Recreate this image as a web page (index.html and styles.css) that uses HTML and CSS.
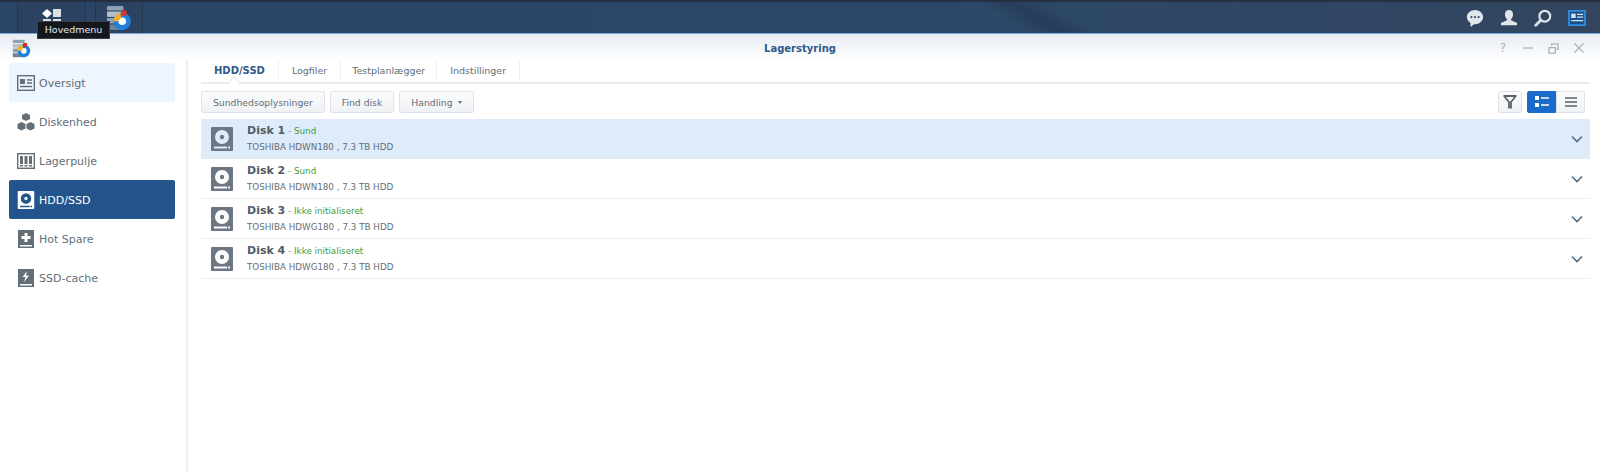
FILE: index.html
```html
<!DOCTYPE html>
<html lang="da">
<head>
<meta charset="utf-8">
<title>Lagerstyring</title>
<link rel="stylesheet" href="styles.css">
</head>
<body>
<svg class="defs" width="0" height="0" aria-hidden="true">
  <defs>
    <symbol id="app" viewBox="0 0 24 24">
      <rect x="1" y="1" width="15" height="4" fill="#8fa3b5"/>
      <rect x="1" y="6" width="15" height="5" fill="#b5c2cd"/>
      <rect x="1" y="12" width="15" height="5" fill="#8fa3b5"/>
      <rect x="1" y="18" width="15" height="5" fill="#6f8396"/>
      <circle cx="15" cy="15" r="8" fill="#1e7fd6"/>
      <circle cx="15" cy="15" r="3.500" fill="#fff"/>
      <path d="M7 15a8 8 0 0 1 6-8l1 5-3 3z" fill="#f0b22c"/>
      <rect x="14" y="5" width="5" height="5" fill="#d8352a"/>
    </symbol>
    <symbol id="disk" viewBox="0 0 22 24">
      <path fill-rule="evenodd" d="M1 0h20a1 1 0 0 1 1 1v22a1 1 0 0 1-1 1H1a1 1 0 0 1-1-1V1a1 1 0 0 1 1-1zM11 3a7 7 0 1 0 0 14a7 7 0 0 0 0-14zM3 19.500v2h13v-2zM17 19.500v2h2v-2z"/>
      <circle cx="11" cy="10" r="2.200"/>
    </symbol>
  </defs>
</svg>

<header class="taskbar">
  <div class="task-left">
    <button class="task-btn task-menu" aria-label="Hovedmenu">
      <svg width="20" height="18" viewBox="0 0 20 18"><path d="M5 0l5 4.500-5 4.500-5-4.500z" fill="#fff"/><rect x="11" y="0" width="8" height="8" fill="#d9dfe5"/><rect x="1" y="10" width="8" height="8" fill="#d9dfe5"/><rect x="11" y="10" width="8" height="8" fill="#d9dfe5"/></svg>
    </button>
    <button class="task-btn task-app" aria-label="Lagerstyring"><svg width="26" height="26"><use href="#app"/></svg></button>
  </div>
  <div class="task-right">
    <svg width="18" height="18" viewBox="0 0 20 20"><path d="M10 1c5 0 9 3.500 9 8s-4 8-9 8l-1 0-4 3 0-4.500C2.500 14 1 11.700 1 9c0-4.500 4-8 9-8z" fill="#dfe6ec"/><circle cx="6" cy="9" r="1.200" fill="#2f4a68"/><circle cx="10" cy="9" r="1.200" fill="#2f4a68"/><circle cx="14" cy="9" r="1.200" fill="#2f4a68"/></svg>
    <svg width="18" height="18" viewBox="0 0 20 20"><path d="M10 1c3 0 4.500 2.300 4.500 5 0 2.200-1 4-2.200 5v1.500L19 15.500V18H1v-2.500l6.700-3V11C6.500 10 5.500 8.200 5.500 6c0-2.700 1.500-5 4.500-5z" fill="#dfe6ec"/></svg>
    <svg width="18" height="18" viewBox="0 0 20 20"><circle cx="12" cy="8" r="6" fill="none" stroke="#dfe6ec" stroke-width="2.400"/><path d="M7.500 12.500L2 18" stroke="#dfe6ec" stroke-width="3" stroke-linecap="round"/></svg>
    <svg width="18" height="16" viewBox="0 0 20 18"><rect width="20" height="18" fill="#2f8fe0"/><rect x="2" y="2" width="16" height="14" fill="#1c4f86"/><rect x="3.500" y="4" width="5" height="5" fill="#cfe4f7"/><path d="M10 5h7M10 8h7M3.500 12h13.500" stroke="#cfe4f7" stroke-width="1.300"/></svg>
  </div>
</header>
<div class="tooltip">Hovedmenu</div>

<div class="window">
  <div class="titlebar">
    <svg class="title-icon" width="19" height="19"><use href="#app"/></svg>
    <div class="title">Lagerstyring</div>
    <div class="win-controls">
      <span class="help">?</span>
      <svg width="12" height="12" viewBox="0 0 12 12"><path d="M1 6h10" stroke="#aab3bb" stroke-width="1.300"/></svg>
      <svg width="11" height="11" viewBox="0 0 12 12"><path d="M1 5h7v6H1zM4 3V1h7v6H9" fill="none" stroke="#aab3bb" stroke-width="1.400"/></svg>
      <svg width="12" height="12" viewBox="0 0 12 12"><path d="M1.500 1.500l9 9M10.500 1.500l-9 9" stroke="#aab3bb" stroke-width="1.300"/></svg>
    </div>
  </div>

  <div class="main">
    <nav class="sidebar">
      <a class="nav-item nav-soft">
        <svg class="nav-icon" width="18" height="16" viewBox="0 0 18 16"><rect x=".7" y=".7" width="16.600" height="14.600" fill="none" stroke="currentColor" stroke-width="1.400"/><rect x="3" y="4" width="5" height="5" fill="currentColor"/><path d="M10 5h5M10 8h5M3 11.500h12" stroke="currentColor" stroke-width="1.300"/></svg>
        <span>Oversigt</span>
      </a>
      <a class="nav-item">
        <svg class="nav-icon" width="18" height="18" viewBox="0 0 18 18"><path d="M9 0l4 2v4l-4 2-4-2V2zM4.500 9l4 2v4.500l-4 2-4-2V11zM13.500 9l4 2v4.500l-4 2-4-2V11z" fill="currentColor"/></svg>
        <span>Diskenhed</span>
      </a>
      <a class="nav-item">
        <svg class="nav-icon" width="18" height="16" viewBox="0 0 18 16"><rect x=".7" y=".7" width="16.600" height="14.600" fill="none" stroke="currentColor" stroke-width="1.400"/><path d="M3 3h3v8H3zM7.500 3h3v8h-3zM12 3h3v8h-3zM3 12h3v1.500H3zM7.500 12h3v1.500h-3zM12 12h3v1.500h-3z" fill="currentColor"/></svg>
        <span>Lagerpulje</span>
      </a>
      <a class="nav-item nav-active">
        <svg class="nav-icon" width="16" height="18"><use href="#disk"/></svg>
        <span>HDD/SSD</span>
      </a>
      <a class="nav-item">
        <svg class="nav-icon" width="16" height="18" viewBox="0 0 16 18"><path fill-rule="evenodd" d="M0 0h16v18H0zM2 15v1.500h12V15zM6.500 3v3h-3v3h3v3h3V9h3V6h-3V3z" fill="currentColor"/></svg>
        <span>Hot Spare</span>
      </a>
      <a class="nav-item">
        <svg class="nav-icon" width="16" height="18" viewBox="0 0 16 18"><path fill-rule="evenodd" d="M0 0h16v18H0zM2 15v1.500h12V15zM9 2L4.500 8h3L6 13l5-6.500H8z" fill="currentColor"/></svg>
        <span>SSD-cache</span>
      </a>
    </nav>

    <section class="content">
      <div class="tabs">
        <a class="tab tab-active">HDD/SSD</a>
        <a class="tab">Logfiler</a>
        <a class="tab tab-tight">Testplanlægger</a>
        <a class="tab">Indstillinger</a>
      </div>
      <div class="toolbar">
        <button class="btn">Sundhedsoplysninger</button>
        <button class="btn">Find disk</button>
        <button class="btn">Handling<i class="caret"></i></button>
        <div class="toolbar-right">
          <button class="btn btn-icon" aria-label="Filter">
            <svg width="16" height="16" viewBox="0 0 16 16"><path d="M1.500 2h13M2.500 2.500L7 8v6.500M13.500 2.500L9 8v6.500" fill="none" stroke="#59626c" stroke-width="1.800"/></svg>
          </button>
          <div class="view-toggle">
            <button class="view-btn view-on" aria-label="Detaljer">
              <svg width="14" height="12" viewBox="0 0 14 12"><path d="M0 0h4v4H0zM0 7h4v4H0z" fill="#fff"/><path d="M6 2h8M6 9h8" stroke="#fff" stroke-width="1.600"/></svg>
            </button>
            <button class="view-btn" aria-label="Liste">
              <svg width="12" height="10" viewBox="0 0 12 10"><path d="M0 1h12M0 5h12M0 9h12" stroke="#59626c" stroke-width="1.600"/></svg>
            </button>
          </div>
        </div>
      </div>

      <ul class="disks">
        <li class="disk disk-selected">
          <svg class="disk-icon" width="22" height="24"><use href="#disk"/></svg>
          <div class="disk-text">
            <div class="disk-head"><b>Disk 1</b> <span class="dash">-</span> <span class="ok">Sund</span></div>
            <div class="disk-sub">TOSHIBA HDWN180 , 7.3 TB HDD</div>
          </div>
          <svg class="chev" width="12" height="8" viewBox="0 0 12 8"><path d="M1 1.500l5 5 5-5" fill="none" stroke="#4f6f8c" stroke-width="1.600"/></svg>
        </li>
        <li class="disk">
          <svg class="disk-icon" width="22" height="24"><use href="#disk"/></svg>
          <div class="disk-text">
            <div class="disk-head"><b>Disk 2</b> <span class="dash">-</span> <span class="ok">Sund</span></div>
            <div class="disk-sub">TOSHIBA HDWN180 , 7.3 TB HDD</div>
          </div>
          <svg class="chev" width="12" height="8" viewBox="0 0 12 8"><path d="M1 1.500l5 5 5-5" fill="none" stroke="#4f6f8c" stroke-width="1.600"/></svg>
        </li>
        <li class="disk">
          <svg class="disk-icon" width="22" height="24"><use href="#disk"/></svg>
          <div class="disk-text">
            <div class="disk-head"><b>Disk 3</b> <span class="dash">-</span> <span class="ok">Ikke initialiseret</span></div>
            <div class="disk-sub">TOSHIBA HDWG180 , 7.3 TB HDD</div>
          </div>
          <svg class="chev" width="12" height="8" viewBox="0 0 12 8"><path d="M1 1.500l5 5 5-5" fill="none" stroke="#4f6f8c" stroke-width="1.600"/></svg>
        </li>
        <li class="disk">
          <svg class="disk-icon" width="22" height="24"><use href="#disk"/></svg>
          <div class="disk-text">
            <div class="disk-head"><b>Disk 4</b> <span class="dash">-</span> <span class="ok">Ikke initialiseret</span></div>
            <div class="disk-sub">TOSHIBA HDWG180 , 7.3 TB HDD</div>
          </div>
          <svg class="chev" width="12" height="8" viewBox="0 0 12 8"><path d="M1 1.500l5 5 5-5" fill="none" stroke="#4f6f8c" stroke-width="1.600"/></svg>
        </li>
      </ul>
    </section>
  </div>
</div>
</body>
</html>
```
FILE: styles.css
```css
* { box-sizing: border-box; }
html, body { margin: 0; height: 100%; }
body {
  width: 1600px;
  height: 472px;
  overflow: hidden;
  position: relative;
  background: #fff;
  font-family: "DejaVu Sans", Verdana, sans-serif;
  font-size: 10px;
  color: #56606a;
  display: flex;
  flex-direction: column;
}
.defs { position: absolute; }
button { font-family: inherit; }

.taskbar {
  height: 34px;
  flex: none;
  display: flex;
  justify-content: space-between;
  align-items: stretch;
  background:
    linear-gradient(31deg, transparent 530px, rgba(30,45,70,.4) 547px, transparent 565px),
    linear-gradient(90deg, #2a4566 0%, #2c4868 60%, #33455f 100%);
  border-top: 2px solid #24303f;
  border-bottom: 1px solid #7ba6d4;
  box-shadow: inset 0 -1px 0 #22466f;
}
.task-left { display: flex; padding-left: 17px; gap: 9px; }
.task-btn {
  border: 0;
  padding: 0;
  display: flex;
  align-items: center;
  justify-content: center;
  background: #2b4262;
  border-left: 1px solid #22364f;
  border-right: 1px solid #22364f;
}
.task-menu { width: 69px; }
.task-app { width: 48px; }
.task-right { display: flex; align-items: center; gap: 16px; padding-right: 14px; }

.tooltip {
  position: absolute;
  z-index: 5;
  left: 37px;
  top: 21px;
  width: 73px;
  height: 18px;
  background: #14181d;
  color: #e8e8e8;
  font-size: 9.500px;
  line-height: 16px;
  text-align: center;
  border: 1px solid #3a3f45;
}

.window { flex: 1; display: flex; flex-direction: column; min-height: 0; }
.titlebar {
  height: 26px;
  flex: none;
  display: flex;
  align-items: center;
  position: relative;
  background: linear-gradient(#e6ecf3, #fff);
  padding: 2px 0 0 12px;
}
.title {
  position: absolute;
  left: 0;
  right: 0;
  text-align: center;
  font-size: 10px;
  font-weight: 700;
  color: #2f5a8a;
}
.win-controls {
  margin-left: auto;
  display: flex;
  align-items: center;
  gap: 14px;
  padding-right: 15px;
  position: relative;
}
.help { font-size: 12px; color: #aab3bb; width: 10px; text-align: center; }

.main { flex: 1; display: flex; min-height: 0; }
.sidebar {
  width: 188px;
  flex: none;
  padding: 3px 11px 0 9px;
  border-right: 2px solid #eef0f2;
  display: flex;
  flex-direction: column;
}
.nav-item {
  height: 39px;
  flex: none;
  display: flex;
  align-items: center;
  gap: 4px;
  padding: 1px 0 0 8px;
  font-size: 11px;
  color: #646e77;
  border-radius: 2px;
}
.nav-icon { width: 18px; flex: none; fill: currentColor; }
.nav-soft { background: #edf5fe; }
.nav-active { background: #24548c; color: #fff; }

.content { flex: 1; min-width: 0; padding: 0 10px 0 13px; display: flex; flex-direction: column; }
.tabs {
  height: 24px;
  flex: none;
  display: flex;
  align-items: center;
  border-bottom: 2px solid #eaecee;
  padding-bottom: 2px;
}
.tab {
  height: 20px;
  display: flex;
  align-items: center;
  padding: 0 13px;
  font-size: 9.500px;
  color: #646e77;
  border-right: 1px solid #eef0f2;
}
.tab-tight { padding: 0 11px; }
.tab-active { font-size: 10px; font-weight: 700; color: #2f5a8a; padding: 0 13px 0 13px; position: relative; }
.tab-active::after {
  content: "";
  position: absolute;
  left: 29px;
  bottom: -6px;
  width: 7px;
  height: 7px;
  background: #fff;
  border-left: 1px solid #e2e5e8;
  border-top: 1px solid #e2e5e8;
  transform: rotate(45deg);
}

.toolbar {
  height: 35px;
  flex: none;
  display: flex;
  align-items: center;
  gap: 5px;
  padding-top: 1px;
}
.btn {
  height: 22px;
  padding: 0 11px;
  font-size: 9.250px;
  color: #646e77;
  background: linear-gradient(#fbfcfd, #eff2f5);
  border: 1px solid #dfe3e7;
  border-radius: 2px;
  display: flex;
  align-items: center;
}
.caret {
  margin-left: 5px;
  border-left: 2.500px solid transparent;
  border-right: 2.500px solid transparent;
  border-top: 3px solid #646e77;
}
.toolbar-right { margin-left: auto; margin-right: 5px; display: flex; gap: 5px; }
.btn-icon { width: 24px; padding: 0; justify-content: center; }
.view-toggle { display: flex; }
.view-btn {
  width: 29px;
  height: 22px;
  padding: 0;
  background: linear-gradient(#fbfcfd, #eff2f5);
  border: 1px solid #dfe3e7;
  border-radius: 0 2px 2px 0;
  display: flex;
  align-items: center;
  justify-content: center;
}
.view-on { background: #1a6ccb; border-color: #1a6ccb; border-radius: 2px 0 0 2px; }

.disks { list-style: none; margin: 0; padding: 0; }
.disk {
  height: 40px;
  display: flex;
  align-items: center;
  padding-left: 10px;
  border-bottom: 1px solid #eceef0;
}
.disk-selected { background: #deebf9; border-bottom-color: #deebf9; }
.disk-icon { fill: #6b7782; flex: none; }
.disk-text { margin-left: 14px; }
.disk-head { font-size: 8.750px; line-height: 15px; color: #8a949c; white-space: pre-wrap; }
.disk-head b { font-size: 11px; color: #505b66; }
.ok { color: #3e9c3e; }
.disk-sub { font-size: 8.750px; line-height: 16px; color: #646e77; }
.chev { margin-left: auto; margin-right: 7px; }
```
